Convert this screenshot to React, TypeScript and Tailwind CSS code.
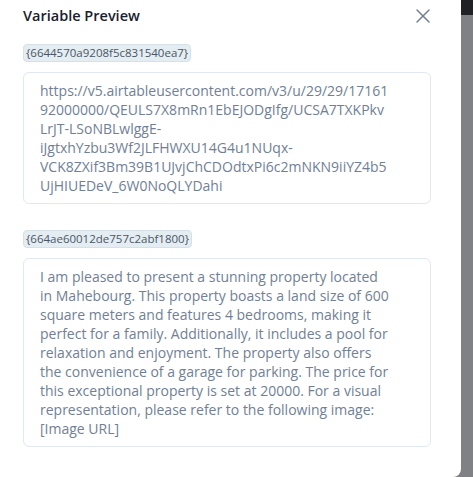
import { X } from "lucide-react";

const variables = [
  {
    key: "{6644570a9208f5c831540ea7}",
    value:
      "https://v5.airtableusercontent.com/v3/u/29/29/1716192000000/QEULS7X8mRn1EbEJODgIfg/UCSA7TXKPkvLrJT-LSoNBLwlggE-iJgtxhYzbu3Wf2JLFHWXU14G4u1NUqx-VCK8ZXif3Bm39B1UJvjChCDOdtxPi6c2mNKN9iiYZ4b5UjHIUEDeV_6W0NoQLYDahi",
  },
  {
    key: "{664ae60012de757c2abf1800}",
    value:
      "I am pleased to present a stunning property located in Mahebourg. This property boasts a land size of 600 square meters and features 4 bedrooms, making it perfect for a family. Additionally, it includes a pool for relaxation and enjoyment. The property also offers the convenience of a garage for parking. The price for this exceptional property is set at 20000. For a visual representation, please refer to the following image: [Image URL]",
  },
];

export default function App() {
  return (
    <div
      className="flex h-[477px] w-[473px] bg-[#808184]"
      style={{ fontFamily: '"Open Sans", "Noto Sans", sans-serif' }}
    >
      {/* Drawer panel */}
      <div className="flex h-full w-[461px] flex-col rounded-br-lg bg-white">
        <div className="flex items-center justify-between pl-[23px] pr-[26px] pt-[4px]">
          <h2 className="text-[14.5px] font-semibold leading-[24px] text-[#1a202c]">
            Variable Preview
          </h2>
          <button className="text-[#718096]">
            <X size={24} strokeWidth={1.5} />
          </button>
        </div>

        <div className="flex flex-col gap-[26px] pl-[23px] pr-[30px] pt-[16px]">
          {variables.map((v) => (
            <div key={v.key} className="flex flex-col items-start gap-[10px]">
              <span className="rounded-[4px] border border-[#d5e1e7] bg-[#e4edf1] px-[2px] text-[11.5px] leading-[16px] text-[#4a5568]">
                {v.key}
              </span>
              <div className="w-full break-words rounded-md border border-[#e2e8f0] py-2 pl-4 pr-[40px] text-[14px] leading-[19px] text-[#718096]">
                {v.value}
              </div>
            </div>
          ))}
        </div>
      </div>

      {/* Backdrop strip */}
      <div className="flex flex-1 flex-col">
        <div className="h-[15px] bg-[#1f2124]" />
        <div className="flex-1" />
      </div>
    </div>
  );
}
